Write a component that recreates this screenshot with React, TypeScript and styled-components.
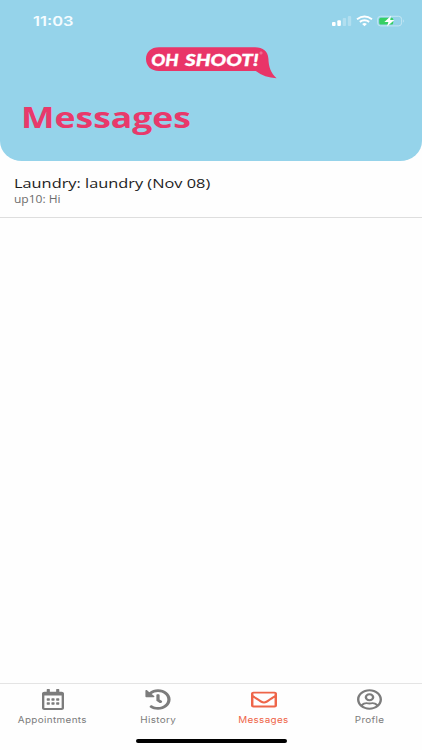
import React from "react";
import styled, { createGlobalStyle } from "styled-components";
import { FaHistory, FaRegCalendarAlt, FaRegEnvelope, FaRegUserCircle } from "react-icons/fa";

const GlobalStyle = createGlobalStyle`
  * { box-sizing: border-box; }
  body { margin: 0; background: #fefefe; }
`;

const Screen = styled.div`
  width: 422px;
  height: 750px;
  display: flex;
  flex-direction: column;
  overflow: hidden;
  background: #fefefe;
  font-family: "Open Sans", "Noto Sans", sans-serif;
`;

const Header = styled.header`
  height: 161px;
  flex: none;
  display: flex;
  flex-direction: column;
  background: #95d3ea;
  border-radius: 0 0 22px 22px / 0 0 20px 20px;
`;

const StatusBar = styled.div`
  height: 42px;
  display: flex;
  justify-content: space-between;
  padding: 13px 17px 0 33px;
`;

const Clock = styled.span`
  font: 600 13.5px/16px Inter, sans-serif;
  color: #f4fcff;
  transform: scaleX(1.22);
  transform-origin: left;
`;

const StatusIcons = styled.svg`
  width: 74px;
  height: 16px;
`;

const Logo = styled.svg`
  width: 134px;
  height: 36px;
  margin: 2px 0 0 144px;
  flex: none;
`;

const Title = styled.h1`
  margin: 17px 0 0 21px;
  font-size: 29px;
  line-height: 40px;
  font-weight: 700;
  color: #e8396b;
  white-space: nowrap;
  transform: scaleX(1.225);
  transform-origin: left;
`;

const Conversation = styled.article`
  height: 57px;
  flex: none;
  padding: 13px 14px 0;
  border-bottom: 1px solid #dedede;
`;

const Subject = styled.div`
  width: max-content;
  font-size: 13.4px;
  line-height: 18px;
  color: #1c1c1c;
  transform: scaleX(1.22);
  transform-origin: left;
`;

const Preview = styled.div`
  width: max-content;
  font-size: 10.2px;
  line-height: 14px;
  color: #6d6d6d;
  transform: scaleX(1.18);
  transform-origin: left;
`;

const Space = styled.main`
  flex: 1;
`;

const TabBar = styled.nav`
  height: 54px;
  flex: none;
  display: grid;
  grid-template-columns: repeat(4, 1fr);
  border-top: 1px solid #e4e4e4;
`;

const Tab = styled.div<{ $active?: boolean }>`
  display: flex;
  flex-direction: column;
  align-items: center;
  padding-top: 5px;
  color: ${(p) => (p.$active ? "#ee6549" : "#7c7c7c")};
`;

const TabIcon = styled.span<{ $width: number }>`
  display: flex;
  height: 21px;
  svg { width: ${(p) => p.$width}px; height: 21px; }
`;

const TabLabel = styled.span`
  margin-top: 4px;
  font: 400 8.4px/12px Inter, sans-serif;
  letter-spacing: 0.3px;
  transform: scaleX(1.18);
`;

const HomeArea = styled.footer`
  height: 13px;
  flex: none;
  display: flex;
  justify-content: center;
  padding-top: 2px;
`;

const HomeIndicator = styled.div`
  width: 151px;
  height: 4px;
  border-radius: 2px;
  background: #000;
`;

const tabs = [
  { label: "Appointments", Icon: FaRegCalendarAlt, width: 22 },
  { label: "History", Icon: FaHistory, width: 26 },
  { label: "Messages", Icon: FaRegEnvelope, width: 26, active: true },
  { label: "Profle", Icon: FaRegUserCircle, width: 25 },
];

export default function App() {
  return (
    <Screen>
      <GlobalStyle />
      <Header>
        <StatusBar>
          <Clock>11:03</Clock>
          <StatusIcons viewBox="0 0 74 16" fill="none">
            <g fill="#fff">
              <rect x="1" y="9" width="3.6" height="4" rx="1" />
              <rect x="6.3" y="7.2" width="3.6" height="5.8" rx="1" />
              <rect x="11.7" y="5" width="3.4" height="8" rx="1" opacity=".28" />
              <rect x="16.8" y="3" width="3.4" height="10" rx="1" opacity=".28" />
            </g>
            <g stroke="#fff" strokeWidth="2">
              <path d="M26 6.2q7.5-5.2 15 0" />
              <path d="M28.8 8.8q4.7-3.2 9.4 0" />
            </g>
            <path d="M31.1 10.9q2.4-1.7 4.8 0l-2.4 2.3Z" fill="#fff" />
            <rect x="46.6" y="3.3" width="24" height="9.6" rx="3" stroke="#c8e8f4" strokeWidth=".9" />
            <rect x="48.2" y="4.7" width="14" height="6.8" rx="1.5" fill="#36cf63" />
            <path d="M72.2 6.3q1.8 1.7 0 3.4Z" fill="#c8e8f4" />
            <path d="M60 2.8L53.4 8.9h4L56 13.5l7.4-6.5h-4.2Z" fill="#fff" />
          </StatusIcons>
        </StatusBar>
        <Logo viewBox="0 0 134 36">
          <path
            d="M15 3.2H111c8 0 13 4 13.4 11.5.3 8.5 2.5 14.5 8.2 19.5-8-.4-15-2.7-20.8-7.2H15C7 27 2 22 2 15S7 3.2 15 3.2Z"
            fill="#e93568"
          />
          <g
            fill="#fff"
            stroke="#fff"
            strokeWidth=".3"
            fontFamily="Lato, sans-serif"
            fontSize="17.2"
            fontStyle="italic"
            fontWeight="900"
          >
            <text x="7.2" y="22.3" textLength="27.5" lengthAdjust="spacingAndGlyphs">OH</text>
            <text x="41" y="22.3" textLength="73.5" lengthAdjust="spacingAndGlyphs">SHOOT!</text>
          </g>
          <circle cx="117" cy="9" r="1.1" fill="none" stroke="#f7a8bf" strokeWidth=".6" />
        </Logo>
        <Title>Messages</Title>
      </Header>
      <Conversation>
        <Subject>Laundry: laundry (Nov 08)</Subject>
        <Preview>up10: Hi</Preview>
      </Conversation>
      <Space />
      <TabBar>
        {tabs.map(({ label, Icon, width, active }) => (
          <Tab key={label} $active={active}>
            <TabIcon $width={width}>
              <Icon preserveAspectRatio="none" />
            </TabIcon>
            <TabLabel>{label}</TabLabel>
          </Tab>
        ))}
      </TabBar>
      <HomeArea>
        <HomeIndicator />
      </HomeArea>
    </Screen>
  );
}
